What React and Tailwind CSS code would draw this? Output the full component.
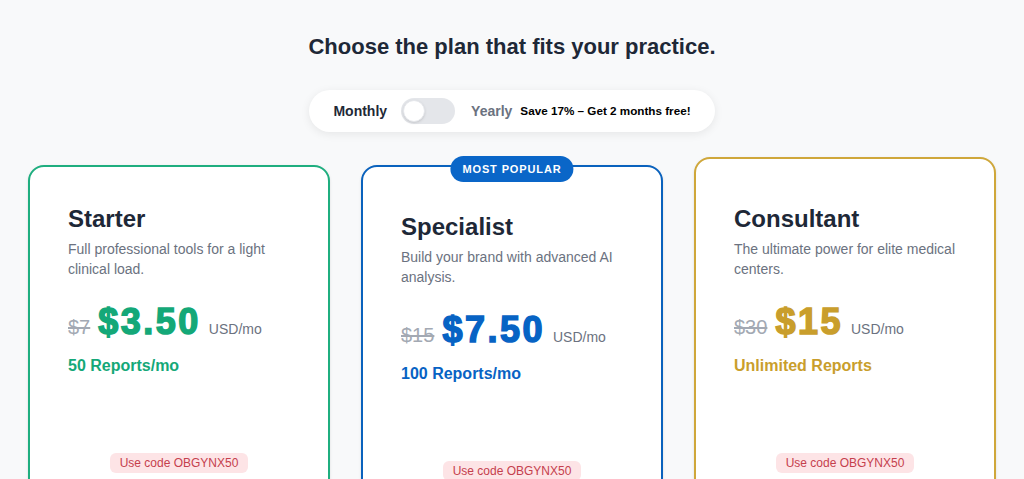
import { useState } from "react";

const plans = [
  {
    name: "Starter",
    desc: "Full professional tools for a light clinical load.",
    old: "$7",
    price: "$3.50",
    reports: "50 Reports/mo",
    border: "border-[#1fae7f]",
    accent: "text-[#14a878]",
    wrap: "mt-2 pt-9",
  },
  {
    name: "Specialist",
    desc: "Build your brand with advanced AI analysis.",
    old: "$15",
    price: "$7.50",
    reports: "100 Reports/mo",
    border: "border-[#0a62bd]",
    accent: "text-[#0763c4]",
    wrap: "mt-2 pt-11",
    popular: true,
  },
  {
    name: "Consultant",
    desc: "The ultimate power for elite medical centers.",
    old: "$30",
    price: "$15",
    reports: "Unlimited Reports",
    border: "border-[#cfa73a]",
    accent: "text-[#c99e2c]",
    wrap: "pt-11 shadow-[0_6px_20px_rgba(0,0,0,0.06)]",
  },
];

function PlanCard({ plan }) {
  return (
    <div
      className={`relative min-h-[360px] rounded-2xl border-2 bg-white px-[38px] pb-10 shadow-sm ${plan.border} ${plan.wrap}`}
    >
      {plan.popular && (
        <div className="absolute -top-[11px] left-1/2 flex h-[26px] -translate-x-1/2 items-center rounded-full bg-[#0a66c8] px-3 text-[11px] font-bold uppercase tracking-[0.08em] text-white">
          Most Popular
        </div>
      )}
      <h3 className="text-2xl leading-8 font-bold text-[#1e2837]">{plan.name}</h3>
      <p className="mt-1 text-sm leading-5 text-[#6b7280]">{plan.desc}</p>
      <div className="mt-[23px] flex items-baseline gap-2">
        <span className="text-xl text-[#a3a9b3] line-through">{plan.old}</span>
        <span
          className={`text-4xl leading-10 font-black tracking-[2.5px] [-webkit-text-stroke:1.5px_currentColor] ${plan.accent}`}
        >
          {plan.price}
        </span>
        <span className="text-sm text-[#6b7280]">USD/mo</span>
      </div>
      <div className={`mt-3 text-base leading-6 font-bold ${plan.accent}`}>{plan.reports}</div>
      <div className="mt-[75px] flex justify-center">
        <span className="rounded-md bg-[#fde4e6] px-2.5 py-0.5 text-xs leading-4 text-[#c5404d]">
          Use code OBGYNX50
        </span>
      </div>
    </div>
  );
}

export default function App() {
  const [yearly, setYearly] = useState(false);

  return (
    <div
      className="min-h-screen bg-[#f8f9fa] px-7 pt-8"
      style={{ fontFamily: '"Liberation Sans", Arial, sans-serif' }}
    >
      <h2 className="text-center text-[22px] leading-[30px] font-bold text-[#1e2837]">
        Choose the plan that fits your practice.
      </h2>

      <div className="mt-7 flex justify-center">
        <div className="flex h-[42px] items-center rounded-full bg-white px-6 shadow-[0_2px_10px_rgba(0,0,0,0.08)]">
          <span className="text-sm font-bold text-[#1f2937]">Monthly</span>
          <button
            onClick={() => setYearly(!yearly)}
            className="ml-[14px] flex h-[26px] w-[54px] items-center rounded-full bg-[#e4e6ea] px-[2px]"
          >
            <span
              className={`h-[22px] w-[22px] rounded-full border border-[#e5e7eb] bg-white shadow-sm transition-transform ${
                yearly ? "translate-x-[28px]" : ""
              }`}
            />
          </button>
          <span className="ml-4 text-sm font-bold text-[#6b7280]">Yearly</span>
          <span className="ml-2 text-[11.7px] font-bold text-black">
            Save 17% – Get 2 months free!
          </span>
        </div>
      </div>

      <div className="mt-[25px] grid grid-cols-3 items-start gap-[31px]">
        {plans.map((p) => (
          <PlanCard key={p.name} plan={p} />
        ))}
      </div>
    </div>
  );
}
